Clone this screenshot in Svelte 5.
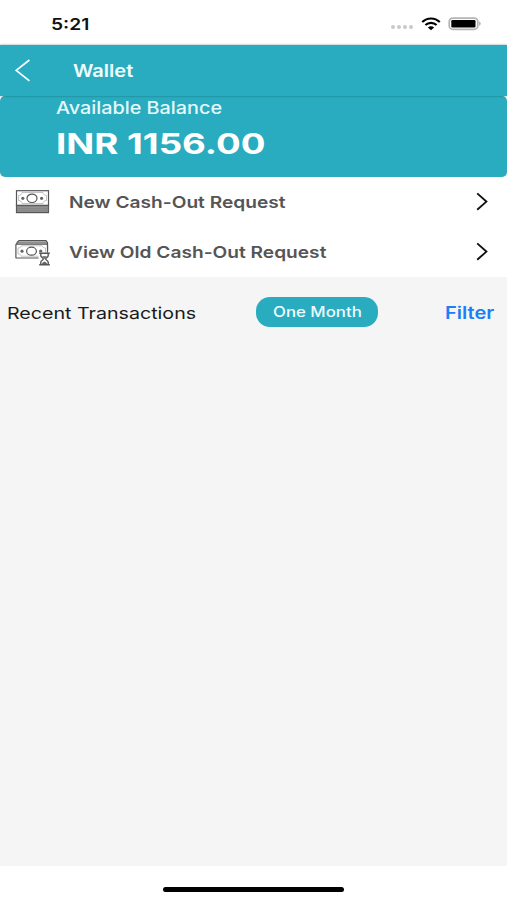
<script lang="ts">
	const balance = '1156.00';

	const actions = [
		{ id: 'new', label: 'New Cash-Out Request' },
		{ id: 'old', label: 'View Old Cash-Out Request' }
	];
</script>

<div class="screen">
	<div class="status-bar">
		<span class="wide time">5:21</span>
		<div class="status-icons">
			<div class="signal">
				{#each Array(4) as _, i (i)}
					<span class="dot"></span>
				{/each}
			</div>
			<svg class="wifi" viewBox="0 0 20 14" width="20" height="14">
				<path d="M1.2 5.1C6.2.2 13.8.2 18.8 5.1" />
				<path d="M4.4 8.1c3.2-3 8-3 11.2 0" />
				<path class="fill" d="M6.9 10.4c1.8-1.6 4.4-1.6 6.2 0L10 13.2z" />
			</svg>
			<svg class="battery" viewBox="0 0 34 14" width="34" height="14">
				<rect class="case" x="1.2" y="1.1" width="28.6" height="11.2" rx="3.6" />
				<rect x="3.3" y="3" width="24.2" height="7.5" rx="1.3" />
				<path class="cap" d="M31.2 4.6c1.9.6 1.9 3.6 0 4.2z" />
			</svg>
		</div>
	</div>

	<header class="nav-bar">
		<svg class="back" viewBox="0 0 16 24" width="16" height="24">
			<path d="M14.4 1L1.2 11.4l13.2 10.4" />
		</svg>
		<h1 class="wide title">Wallet</h1>
	</header>

	<section class="balance-card">
		<div><span class="wide caption">Available Balance</span></div>
		<div><span class="wide amount">INR {balance}</span></div>
	</section>

	<nav class="actions">
		{#each actions as action (action.id)}
			<div class="action">
				<svg class="note" viewBox="0 0 36 28" width="36" height="28">
					{#if action.id === 'new'}
						<rect class="stack" x="1.5" y="17" width="32" height="7.6" />
						<path class="edge" d="M1.5 18.8h32M1.5 20.8h32M1.5 22.8h32" />
						<rect class="paper" x="1.5" y="2.7" width="32" height="14.6" />
						<path class="detail" d="M3.5 7.5c2 0 3.5-1.3 3.5-3h21c0 1.7 1.5 3 3.5 3v5c-2 0-3.5 1.3-3.5 3H7c0-1.7-1.5-3-3.5-3z" />
						<ellipse class="coin" cx="17" cy="10.3" rx="5" ry="4.2" />
						<circle class="spot" cx="7.8" cy="10.3" r="1.6" />
						<circle class="spot" cx="26.6" cy="10.3" r="1.6" />
					{:else}
						<path class="back-note" d="M2 7V4.6l2-2h27l1.5 2V12" />
						<path class="edge" d="M3 4.4h29" />
						<rect class="paper" x=".9" y="6.2" width="31.6" height="13.8" rx=".6" />
						<path class="detail" d="M3 10c1.8 0 3.3-1 3.3-2.2h20.9C27.2 9 28.7 10 30.5 10v6c-1.8 0-3.3 1-3.3 2.2H6.3C6.3 17 4.8 16 3 16z" />
						<ellipse class="coin" cx="16.5" cy="13.2" rx="4.9" ry="4" />
						<circle class="spot" cx="7" cy="13.2" r="1.6" />
						<circle class="spot" cx="25.7" cy="13.2" r="1.6" />
						<rect class="clear" x="23.6" y="14.6" width="12" height="13" />
						<path class="glass" d="M24.2 15.2h10.6M24.2 26.8h10.6M25.8 15.4v2.4c0 1.5 2.6 2.2 2.6 3.2s-2.6 1.6-2.6 3.2v2.4M33.2 15.4v2.4c0 1.5-2.6 2.2-2.6 3.2s2.6 1.6 2.6 3.2v2.4" />
						<path class="sand" d="M27 18.2h5L29.5 21zM26.8 26.2c.4-1.6 1.6-2 2.7-2.8 1.1.8 2.3 1.2 2.7 2.8z" />
					{/if}
				</svg>
				<span class="wide label">{action.label}</span>
				<svg class="chevron" viewBox="0 0 14 20" width="14" height="20">
					<path d="M2.2 1.4l9.2 8.2-9.2 8.2" />
				</svg>
			</div>
		{/each}
	</nav>

	<main class="transactions">
		<div class="toolbar">
			<div><span class="wide heading">Recent Transactions</span></div>
			<button class="period"><span class="wide">One Month</span></button>
			<button class="filter"><span class="wide">Filter</span></button>
		</div>
	</main>

	<footer class="home">
		<div class="indicator"></div>
	</footer>
</div>

<style>
	:global(body) {
		margin: 0;
		background: #fff;
	}

	.screen {
		height: 900px;
		display: flex;
		flex-direction: column;
		overflow: hidden;
		font-family: Inter, 'Liberation Sans', sans-serif;
		background: #fff;
	}

	/* expanded letterforms, stretched from the left edge */
	.wide {
		display: inline-block;
		white-space: nowrap;
		transform: scaleX(var(--stretch, 1.16));
		transform-origin: left center;
	}

	button {
		border: 0;
		padding: 0;
		background: none;
		font-family: inherit;
	}

	.status-bar {
		flex: none;
		height: 45px;
		box-sizing: border-box;
		padding: 2px 25px 0 51px;
		display: flex;
		align-items: center;
		justify-content: space-between;
	}

	.time {
		--stretch: 1.2;
		font-size: 16px;
		font-weight: 600;
		color: #111;
	}

	.status-icons {
		display: flex;
		align-items: center;
		gap: 7px;
	}

	.signal {
		display: flex;
		gap: 2px;
		padding-top: 7px;
		margin-right: 1px;
	}

	.dot {
		width: 4px;
		height: 4px;
		border-radius: 50%;
		background: #c9c9c9;
	}

	.wifi {
		fill: none;
		stroke: #000;
		stroke-width: 2.1;
	}

	.wifi .fill {
		fill: #000;
		stroke: none;
	}

	.battery .case {
		fill: #fff;
		stroke: #b4b4b4;
		stroke-width: 1.7;
	}

	.battery .cap {
		fill: #aaa;
	}

	.nav-bar {
		flex: none;
		height: 51px;
		display: flex;
		align-items: center;
		padding-left: 15px;
		gap: 42px;
		background: #29acbf;
		box-shadow: 0 0 2px rgba(0, 60, 70, 0.5);
		position: relative;
	}

	.back {
		fill: none;
		stroke: #fff;
		stroke-width: 1.7;
	}

	.title {
		--stretch: 1.18;
		margin: 0;
		font-size: 17px;
		font-weight: 600;
		color: #effcff;
	}

	.balance-card {
		flex: none;
		height: 81px;
		box-sizing: border-box;
		padding: 1px 0 0 56px;
		border-radius: 5px;
		background: #29acbf;
	}

	.caption {
		--stretch: 1.165;
		font-size: 17px;
		font-weight: 500;
		line-height: 22px;
		color: #e6f9fc;
	}

	.amount {
		--stretch: 1.265;
		font-size: 29px;
		line-height: 50px;
		font-weight: 700;
		color: #fff;
	}

	.actions {
		flex: none;
		height: 100px;
	}

	.action {
		height: 50px;
		display: flex;
		align-items: center;
		padding: 0 18px 0 15px;
	}

	.label {
		margin-left: 17.5px;
		font-size: 16.5px;
		font-weight: 600;
		color: #555;
	}

	.chevron {
		margin-left: auto;
		fill: none;
		stroke: #111;
		stroke-width: 1.9;
	}

	.note {
		fill: none;
		stroke: #555;
		stroke-width: 1.2;
	}

	.note .stack {
		fill: #999;
	}

	.note .edge {
		stroke: #777;
		stroke-width: 0.8;
	}

	.note .paper {
		fill: #fff;
	}

	.note .detail {
		stroke: #aaa;
		stroke-width: 0.7;
	}

	.note .spot,
	.note .sand {
		fill: #666;
		stroke: none;
	}

	.note .back-note {
		fill: #ccc;
	}

	.note .clear {
		fill: #fff;
		stroke: none;
	}

	.note .glass {
		stroke-width: 1.4;
	}

	.transactions {
		flex: 1;
		background: #f5f5f5;
	}

	.toolbar {
		display: grid;
		grid-template-columns: 249px 122px 1fr;
		align-items: center;
		padding: 20px 12px 0 7px;
	}

	.heading {
		--stretch: 1.19;
		padding-top: 1px;
		font-size: 16.5px;
		color: #1a1a1a;
	}

	.period {
		--stretch: 1.2;
		height: 30px;
		border-radius: 14px;
		background: #29acbf;
		font-size: 14px;
		font-weight: 500;
		color: #effcff;
		text-align: left;
		padding: 0 0 1px 17px;
	}

	.filter {
		--stretch: 1.18;
		padding: 2px 0 0 67px;
		text-align: left;
		font-size: 17px;
		font-weight: 600;
		color: #1b80f5;
	}

	.home {
		flex: none;
		height: 34px;
		display: flex;
		justify-content: center;
	}

	.indicator {
		width: 181px;
		height: 5px;
		margin-top: 21px;
		border-radius: 3px;
		background: #000;
	}
</style>
